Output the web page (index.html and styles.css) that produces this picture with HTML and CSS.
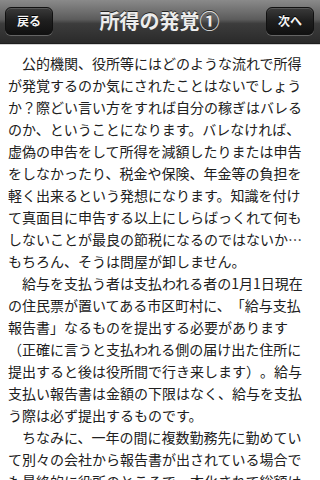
FILE: index.html
```html
<!DOCTYPE html>
<html lang="ja">
<head>
<meta charset="utf-8">
<title>所得の発覚①</title>
<link rel="stylesheet" href="styles.css">
</head>
<body>
<header class="navbar">
  <button class="nav-btn">戻る</button>
  <h1 class="nav-title">所得の発覚①</h1>
  <button class="nav-btn">次へ</button>
</header>
<main class="content">
  <p class="para">公的機関、役所等にはどのような流れで所得が発覚するのか気にされたことはないでしょうか？際どい言い方をすれば自分の稼ぎはバレるのか、ということになります。バレなければ、虚偽の申告をして所得を減額したりまたは申告をしなかったり、税金や保険、年金等の負担を軽く出来るという発想になります。知識を付けて真面目に申告する以上にしらばっくれて何もしないことが最良の節税になるのではないか…もちろん、そうは問屋が卸しません。</p>
  <p class="para">給与を支払う者は支払われる者の1月1日現在の住民票が置いてある市区町村に、「給与支払報告書」なるものを提出する必要があります（正確に言うと支払われる側の届け出た住所に提出すると後は役所間で行き来します）。給与支払い報告書は金額の下限はなく、給与を支払う際は必ず提出するものです。</p>
  <p class="para">ちなみに、一年の間に複数勤務先に勤めていて別々の会社から報告書が出されている場合でも最終的に役所のところで一本化されて総額は把握されます。</p>
</main>
</body>
</html>
```

FILE: styles.css
```css
html, body {
  margin: 0;
  padding: 0;
  background: #ffffff;
}

body {
  width: 320px;
  height: 480px;
  overflow: hidden;
  font-family: "Noto Sans CJK JP", "Noto Sans", sans-serif;
}

.navbar {
  height: 44px;
  box-sizing: border-box;
  display: flex;
  align-items: center;
  justify-content: space-between;
  padding: 0 6px 1px 5px;
  background: linear-gradient(to bottom, #8a8a8a 0%, #5c5c5c 45%, #3c3c3c 55%, #2a2a2a 100%);
  border-bottom: 1px solid #1e1e1e;
  box-shadow: 0 1px 0 #d4d4d4;
}

.nav-btn {
  width: 48px;
  height: 28px;
  border: 1px solid #111;
  border-radius: 6px;
  background: linear-gradient(to bottom, #3a3a3a 0%, #1e1e1e 50%, #111 100%);
  box-shadow: 0 1px 0 rgba(255,255,255,0.25), inset 0 1px 0 rgba(255,255,255,0.15);
  color: #f4f4f4;
  font-family: "Noto Sans CJK JP", sans-serif;
  font-size: 12px;
  font-weight: bold;
  padding: 0;
  line-height: 26px;
  text-shadow: 0 -1px 0 #000;
}

.nav-title {
  margin: 0;
  color: #ececec;
  font-size: 20px;
  font-weight: bold;
  line-height: 24px;
  text-shadow: 0 -1px 0 #222;
}

.content {
  padding: 8px 16px 0 8px;
  color: #202020;
  font-size: 14px;
  line-height: 22px;
  text-spacing-trim: space-all;
}

.para {
  margin: 0;
  text-indent: 1em;
}
```
